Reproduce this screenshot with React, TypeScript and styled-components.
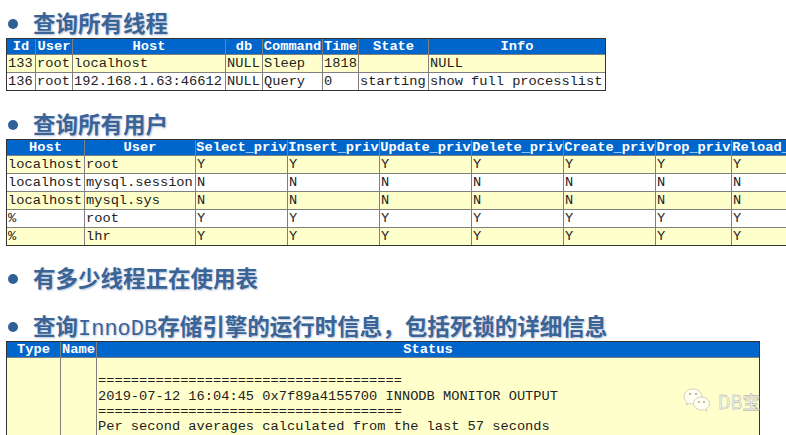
import React from "react";
import styled, { createGlobalStyle } from "styled-components";

const Global = createGlobalStyle`
  html, body { margin: 0; padding: 0; background: #fff; }
  #root { width: 786px; height: 435px; overflow: hidden; }
`;

const Page = styled.div`
  width: 786px;
  height: 435px;
  overflow: hidden;
  padding: 10px 0 0 6px;
  box-sizing: border-box;
`;

const Heading = styled.h2<{ $top: number; $height?: number }>`
  margin: ${(p) => p.$top}px 0 0 2px;
  height: ${(p) => p.$height ?? 28}px;
  display: flex;
  align-items: center;
  gap: 15px;
  font-family: "Noto Sans CJK SC", sans-serif;
  font-weight: 700;
  font-size: 22.5px;
  white-space: nowrap;
  color: #3a6496;
  text-shadow: 1px 1px 2px rgba(90, 120, 170, 0.45);
`;

const Label = styled.span`
  display: block;
  height: 28px;
  line-height: 24px;
`;

const Bullet = styled.i`
  flex: none;
  width: 10px;
  height: 10px;
  border-radius: 50%;
  background: #2f6098;
`;

const Latin = styled.span`
  font-family: "Liberation Mono", monospace;
  font-weight: 400;
  font-size: 22px;
  line-height: 1;
`;

const Grid = styled.table<{ $width: number }>`
  width: ${(p) => p.$width}px;
  table-layout: fixed;
  border-collapse: separate;
  border-spacing: 0;
  border: 1px solid #333;
  font-family: "Liberation Mono", "Courier New", monospace;
  font-size: 13.7px;
  line-height: 15px;
`;

const Head = styled.th`
  background: #0066cc;
  color: #fff;
  font-weight: 700;
  height: 15px;
  padding: 0;
  text-align: center;
  white-space: nowrap;
  overflow: hidden;
  border-left: 1px solid #808080;
  border-bottom: 1px solid #808080;
  &:first-child { border-left: 0; }
`;

const Row = styled.tr<{ $odd: boolean }>`
  background: ${(p) => (p.$odd ? "#ffffcc" : "#fff")};
`;

const Cell = styled.td`
  height: 17px;
  padding: 0 0 0 1px;
  color: #222;
  white-space: pre;
  overflow: hidden;
  border-left: 1px solid #808080;
  border-top: 1px solid #808080;
  tr:first-child > & { border-top: 0; }
  &:first-child { border-left: 0; }
`;

const StatusRow = styled.tr`
  background: #ffffcc;
`;

const StatusCell = styled.td`
  height: 120px;
  padding: 0 0 0 1px;
  vertical-align: top;
  color: #222;
  border-left: 1px solid #808080;
  &:first-child { border-left: 0; }
`;

const StatusText = styled.pre`
  margin: 0;
  font: inherit;
  line-height: 15.33px;
`;

const Clip = styled.div`
  position: relative;
  width: 754px;
  height: 94px;
  overflow: hidden;
`;

const Watermark = styled.div`
  position: absolute;
  left: 677px;
  top: 47px;
  display: flex;
  align-items: center;
  gap: 7px;
`;

const WatermarkText = styled.span`
  font-family: "Noto Sans CJK SC", sans-serif;
  font-size: 18px;
  line-height: 24px;
  white-space: nowrap;
  color: #fdfdf0;
  -webkit-text-stroke: 0.4px #9a9a9a;
`;

const Mark = () => (
  <svg width="28" height="25" viewBox="0 0 28 25" fill="#fffff2" stroke="#c4c4b4" strokeWidth="0.8">
    <path d="M10 1C4.8 1 1 4.4 1 8.6c0 2.4 1.2 4.4 3.2 5.8L3.4 17l3-1.5c1 .3 2.2.5 3.6.5 5 0 9-3.3 9-7.4S15 1 10 1z" />
    <path d="M18.5 9c-4.400 0-8 2.900-8 6.500s3.600 6.500 8 6.500c1 0 1.900-.1 2.800-.4l2.700 1.400-.7-2.300c1.900-1.200 3.200-3.100 3.200-5.200 0-3.600-3.600-6.500-8-6.500z" />
    <g fill="#a8a898" stroke="none">
      <circle cx="7" cy="6" r="1.100" />
      <circle cx="13" cy="6" r="1.100" />
      <circle cx="16" cy="14" r="1" />
      <circle cx="21" cy="14" r="1" />
    </g>
  </svg>
);

type TableData = { cols: number[]; heads: string[]; rows: string[][]; width: number };

const threads: TableData = {
  width: 600,
  cols: [28, 37, 153, 37, 60, 36, 70, 177],
  heads: ["Id", "User", "Host", "db", "Command", "Time", "State", "Info"],
  rows: [
    ["133", "root", "localhost", "NULL", "Sleep", "1818", "", "NULL"],
    ["136", "root", "192.168.1.63:46612", "NULL", "Query", "0", "starting", "show full processlist"],
  ],
};

const users: TableData = {
  width: 818,
  cols: [77, 111, 92, 92, 92, 92, 92, 76, 92],
  heads: ["Host", "User", "Select_priv", "Insert_priv", "Update_priv", "Delete_priv", "Create_priv", "Drop_priv", "Reload_priv"],
  rows: [
    ["localhost", "root", "Y", "Y", "Y", "Y", "Y", "Y", "Y"],
    ["localhost", "mysql.session", "N", "N", "N", "N", "N", "N", "N"],
    ["localhost", "mysql.sys", "N", "N", "N", "N", "N", "N", "N"],
    ["%", "root", "Y", "Y", "Y", "Y", "Y", "Y", "Y"],
    ["%", "lhr", "Y", "Y", "Y", "Y", "Y", "Y", "Y"],
  ],
};

const DataTable = ({ data }: { data: TableData }) => (
  <Grid $width={data.width}>
    <colgroup>
      {data.cols.map((w, i) => (
        <col key={i} width={w} />
      ))}
    </colgroup>
    <thead>
      <tr>
        {data.heads.map((h) => (
          <Head key={h}>{h}</Head>
        ))}
      </tr>
    </thead>
    <tbody>
      {data.rows.map((r, i) => (
        <Row key={i} $odd={i % 2 === 0}>
          {r.map((c, j) => (
            <Cell key={j}>{c}</Cell>
          ))}
        </Row>
      ))}
    </tbody>
  </Grid>
);

const status = `
=====================================
2019-07-12 16:04:45 0x7f89a4155700 INNODB MONITOR OUTPUT
=====================================
Per second averages calculated from the last 57 seconds`;

export default function App() {
  return (
    <Page>
      <Global />
      <Heading $top={0}>
        <Bullet />
        <Label>查询所有线程</Label>
      </Heading>
      <DataTable data={threads} />
      <Heading $top={19} $height={29}>
        <Bullet />
        <Label>查询所有用户</Label>
      </Heading>
      <DataTable data={users} />
      <Heading $top={19}>
        <Bullet />
        <Label>有多少线程正在使用表</Label>
      </Heading>
      <Heading $top={19} $height={29}>
        <Bullet />
        <Label>
          查询<Latin>InnoDB</Latin>存储引擎的运行时信息，包括死锁的详细信息
        </Label>
      </Heading>
      <Clip>
        <Grid $width={754}>
          <colgroup>
            <col width={53} />
            <col width={36} />
            <col width={663} />
          </colgroup>
          <thead>
            <tr>
              <Head>Type</Head>
              <Head>Name</Head>
              <Head>Status</Head>
            </tr>
          </thead>
          <tbody>
            <StatusRow>
              <StatusCell />
              <StatusCell />
              <StatusCell>
                <StatusText>{status}</StatusText>
              </StatusCell>
            </StatusRow>
          </tbody>
        </Grid>
        <Watermark>
          <Mark />
          <WatermarkText>DB宝</WatermarkText>
        </Watermark>
      </Clip>
    </Page>
  );
}
